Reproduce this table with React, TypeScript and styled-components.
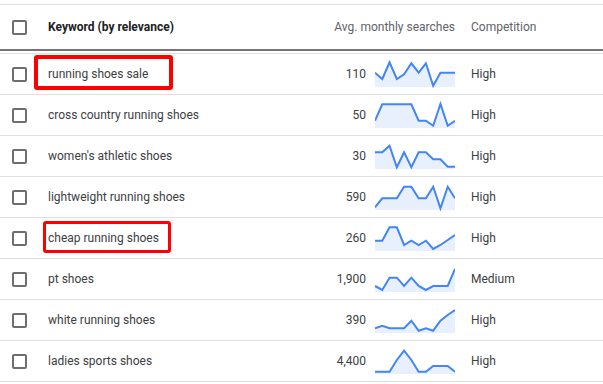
import React from "react";
import styled, { createGlobalStyle } from "styled-components";

const Global = createGlobalStyle`
  html, body { margin: 0; padding: 0; background: #ffffff; }
  body { font-family: Roboto, "Liberation Sans", Arial, sans-serif; }
`;

const Table = styled.div`
  width: 603px;
  padding-top: 4px;
`;

const HeaderRow = styled.div`
  display: flex;
  align-items: center;
  height: 44px;
  border-top: 1px solid #e0e0e0;
  border-bottom: 2px solid #757575;
`;

const Body = styled.div`
  margin-top: 2px;
  border-top: 1px solid #e0e0e0;
`;

const Row = styled.div`
  display: flex;
  align-items: center;
  height: 40px;
  border-bottom: 1px solid #e0e0e0;
`;

const CheckCell = styled.div`
  width: 48px;
  padding-left: 12px;
  box-sizing: border-box;
  display: flex;
  align-items: center;
`;

const Checkbox = styled.span`
  display: block;
  width: 15px;
  height: 15px;
  box-sizing: border-box;
  border: 2px solid #6e6e6e;
  border-radius: 2px;
`;

const KeywordCell = styled.div<{ $head?: boolean }>`
  flex: 1;
  position: relative;
  height: 100%;
  display: flex;
  align-items: center;
  font-size: 12px;
  font-weight: ${(p) => (p.$head ? 700 : 400)};
  color: ${(p) => (p.$head ? "#202124" : "#3c4043")};
`;

const Highlight = styled.span<{ $top: number; $left: number; $w: number; $h: number; $bw: number }>`
  position: absolute;
  top: ${(p) => p.$top}px;
  left: ${(p) => p.$left}px;
  width: ${(p) => p.$w}px;
  height: ${(p) => p.$h}px;
  box-sizing: border-box;
  border: ${(p) => p.$bw}px solid #ff0000;
  border-radius: 3px;
  pointer-events: none;
`;

const SearchCell = styled.div<{ $head?: boolean }>`
  width: 150px;
  height: 100%;
  display: flex;
  align-items: center;
  justify-content: flex-end;
  gap: 9px;
  font-size: 12px;
  color: ${(p) => (p.$head ? "#5f6368" : "#3c4043")};
`;

const CompCell = styled.div<{ $head?: boolean }>`
  width: 132px;
  margin-left: 16px;
  font-size: 12px;
  color: ${(p) => (p.$head ? "#5f6368" : "#3c4043")};
`;

const Spark = styled.svg`
  display: block;
  width: 80px;
  height: 40px;
  flex: none;
`;

type Item = {
  kw: string;
  vol: string;
  comp: string;
  pts: number[];
  hl?: { top: number; left: number; w: number; h: number; bw: number };
};

const data: Item[] = [
  { kw: "running shoes sale", vol: "110", comp: "High", pts: [18.7, 25, 8.3, 25, 20.3, 9.3, 18.7, 9.3, 31.7, 18.7, 18.7, 18.7], hl: { top: 1, left: -14, w: 139, h: 35, bw: 4 } },
  { kw: "cross country running shoes", vol: "50", comp: "High", pts: [25.7, 9.3, 9.3, 9.3, 9.3, 9.3, 25.7, 25.7, 30.7, 9, 30.7, 25.7] },
  { kw: "women's athletic shoes", vol: "30", comp: "High", pts: [16.3, 16.3, 9.7, 31.3, 16.3, 31.3, 16.3, 16.3, 23.3, 23.3, 30.7, 30.7] },
  { kw: "lightweight running shoes", vol: "590", comp: "High", pts: [30.3, 21.3, 21.3, 21.3, 9.7, 9.7, 21.3, 21.3, 9.7, 31.3, 9.7, 21.3] },
  { kw: "cheap running shoes", vol: "260", comp: "High", pts: [22.7, 22.7, 9.3, 9.3, 27, 22.7, 27, 22.7, 31, 27, 22, 17], hl: { top: 3, left: -5, w: 128, h: 32, bw: 3 } },
  { kw: "pt shoes", vol: "1,900", comp: "Medium", pts: [27, 31, 18.7, 18.7, 27, 18.7, 27, 31, 27, 27, 27, 10] },
  { kw: "white running shoes", vol: "390", comp: "High", pts: [28.3, 25.7, 28.3, 28.3, 28.3, 20.7, 30.7, 28.3, 30.7, 20.7, 15, 10] },
  { kw: "ladies sports shoes", vol: "4,400", comp: "High", pts: [30.7, 30.7, 30.7, 19, 9.7, 19, 30.7, 30.7, 25, 25, 25, 30.7] },
];

function Sparkline({ pts }: { pts: number[] }) {
  const step = 80 / (pts.length - 1);
  const coords = pts.map((y, i) => `${(i * step).toFixed(2)},${y}`);
  const line = "M" + coords.join(" L");
  const area = `${line} L80,33 L0,33 Z`;
  return (
    <Spark viewBox="0 0 80 40">
      <path d={area} fill="#e8f0fe" stroke="none" />
      <path d={line} fill="none" stroke="#4285f4" strokeWidth={2} />
    </Spark>
  );
}

export default function App() {
  return (
    <>
      <Global />
      <Table>
        <HeaderRow>
          <CheckCell>
            <Checkbox />
          </CheckCell>
          <KeywordCell $head>Keyword (by relevance)</KeywordCell>
          <SearchCell $head>Avg. monthly searches</SearchCell>
          <CompCell $head>Competition</CompCell>
        </HeaderRow>
        <Body>
          {data.map((d) => (
            <Row key={d.kw}>
              <CheckCell>
                <Checkbox />
              </CheckCell>
              <KeywordCell>
                {d.kw}
                {d.hl && <Highlight $top={d.hl.top} $left={d.hl.left} $w={d.hl.w} $h={d.hl.h} $bw={d.hl.bw} />}
              </KeywordCell>
              <SearchCell>
                {d.vol}
                <Sparkline pts={d.pts} />
              </SearchCell>
              <CompCell>{d.comp}</CompCell>
            </Row>
          ))}
        </Body>
      </Table>
    </>
  );
}
